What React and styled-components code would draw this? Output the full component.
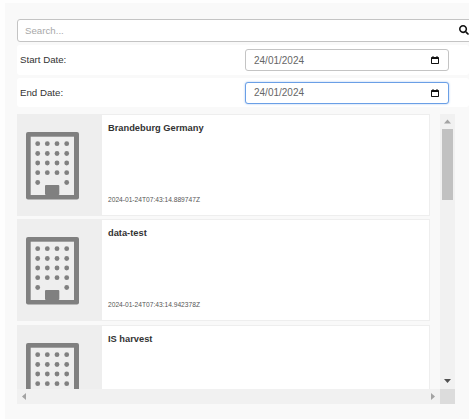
import React from 'react';
import styled, { createGlobalStyle } from 'styled-components';
import { FaSearch } from 'react-icons/fa';

const GlobalStyle = createGlobalStyle`
  html, body {
    margin: 0;
    height: 100%;
    overflow: hidden;
    background: #fefefe;
    font-family: "Liberation Sans", Arial, sans-serif;
  }
`;

const items = [
  { name: 'Brandeburg Germany', date: '2024-01-24T07:43:14.889747Z' },
  { name: 'data-test', date: '2024-01-24T07:43:14.942378Z' },
  { name: 'IS harvest', date: '2024-01-24T07:43:14.990112Z' },
];

const BuildingIcon = () => {
  const xs = [37.7, 47.3, 57, 66.7];
  const ys = [143.7, 153.5, 163, 172.7];
  return (
    <svg width="84" height="102" viewBox="17 114 84 102" aria-hidden="true">
      <rect x="26" y="132" width="53" height="67.5" rx="2" fill="#808080" />
      <rect x="30.7" y="136.7" width="43.3" height="58.3" fill="#eeeeee" />
      {ys.map((y) => xs.map((x) => <circle key={`${x}-${y}`} cx={x} cy={y} r="2.4" fill="#808080" />))}
      <circle cx="37.7" cy="182.5" r="2.4" fill="#808080" />
      <circle cx="66.7" cy="182.5" r="2.4" fill="#808080" />
      <rect x="45" y="185" width="14.3" height="10" rx="1" fill="#808080" />
    </svg>
  );
};

const CalendarIcon = () => (
  <svg width="8" height="8" viewBox="0 0 8 8" aria-hidden="true">
    <path d="M1.5 0h1v1h3V0h1v1h.7a.8.8 0 0 1 .8.8v5.4a.8.8 0 0 1-.8.8H.8A.8.8 0 0 1 0 7.2V1.8A.8.8 0 0 1 .8 1h.7zM1 3v4h6V3z" fill="#111" />
  </svg>
);

const Arrow = ({ points, color }) => (
  <svg width="15" height="15" viewBox="0 0 15 15" aria-hidden="true">
    <polygon points={points} fill={color} />
  </svg>
);

const DateInputBox = ({ focused }) => (
  <DateField>
    <DateInput type="text" defaultValue="24/01/2024" $focused={focused} />
    <PickerIcon>
      <CalendarIcon />
    </PickerIcon>
  </DateField>
);

const App = () => {
  return (
    <>
      <GlobalStyle />
      <Page>
        <Panel>
          <SearchBar>
            <SearchInput placeholder="Search..." />
            <SearchIcon>
              <FaSearch />
            </SearchIcon>
          </SearchBar>
          <DateRow $height={30}>
            <DateLabel $lift={1}>Start Date:</DateLabel>
            <DateInputBox />
          </DateRow>
          <DateRow $height={29}>
            <DateLabel $lift={0}>End Date:</DateLabel>
            <DateInputBox focused />
          </DateRow>
          <ListFrame>
            <Viewport>
              {items.map((item) => (
                <Card key={item.date}>
                  <Thumb>
                    <BuildingIcon />
                  </Thumb>
                  <CardBody>
                    <CardTitle>{item.name}</CardTitle>
                    <CardDate>{item.date}</CardDate>
                  </CardBody>
                </Card>
              ))}
            </Viewport>
            <VerticalBar>
              <Arrow points="4,9.5 11,9.5 7.5,5.5" color="#a3a3a3" />
              <BarSlot>
                <BarThumb />
              </BarSlot>
              <Arrow points="4,5 11,5 7.5,9" color="#505050" />
            </VerticalBar>
            <HorizontalBar>
              <Arrow points="9,4 9,11 5,7.5" color="#a3a3a3" />
              <Arrow points="6,4 6,11 10,7.5" color="#a3a3a3" />
            </HorizontalBar>
            <BarCorner />
          </ListFrame>
        </Panel>
      </Page>
    </>
  );
};

const Page = styled.div`
  width: 469px;
  height: 419px;
  overflow: hidden;
  padding: 3px 0 0 5px;
  box-sizing: border-box;
`;

const Panel = styled.div`
  width: 464px;
  height: 416px;
  background: #f9f9f9;
  padding: 16px 0 0 12px;
  box-sizing: border-box;
`;

const SearchBar = styled.div`
  position: relative;
  width: 470px;
  height: 23px;
`;

const SearchInput = styled.input`
  width: 100%;
  height: 100%;
  box-sizing: border-box;
  background: #fff;
  border: 1px solid #c4c4c4;
  border-radius: 3px;
  padding: 0 8px 0 7px;
  font-family: inherit;
  font-size: 9.7px;
  outline: none;

  &::placeholder {
    color: #a8a8a8;
  }
`;

const SearchIcon = styled.span`
  position: absolute;
  top: 6px;
  left: 442px;
  font-size: 10px;
  line-height: 10px;
  color: #111;
`;

const DateRow = styled.div`
  display: flex;
  align-items: center;
  justify-content: space-between;
  width: 452px;
  height: ${(p) => p.$height}px;
  margin-top: 3px;
  padding: 0 20px 0 3px;
  box-sizing: border-box;
  background: #fff;
  border-radius: 3px;
`;

const DateLabel = styled.label`
  font-size: 9.7px;
  line-height: 10px;
  margin-top: ${(p) => -p.$lift}px;
  color: #333;
`;

const DateField = styled.div`
  position: relative;
  width: 204px;
  height: 22px;
`;

const DateInput = styled.input`
  width: 100%;
  height: 100%;
  box-sizing: border-box;
  padding: 0 8px;
  background: #fff;
  border: 1px solid ${(p) => (p.$focused ? '#6a9fe6' : '#c4c4c4')};
  border-radius: 3px;
  box-shadow: ${(p) => (p.$focused ? '0 0 2px rgba(90, 150, 230, 0.6)' : 'none')};
  font-family: inherit;
  font-size: 10px;
  color: #666;
  outline: none;
`;

const PickerIcon = styled.span`
  position: absolute;
  top: 7px;
  right: 10px;
  display: flex;
`;

const ListFrame = styled.div`
  display: grid;
  grid-template-columns: 423px 15px;
  grid-template-rows: 275px 15px;
  margin-top: 7px;
`;

const Viewport = styled.div`
  overflow: hidden;
`;

const VerticalBar = styled.div`
  display: flex;
  flex-direction: column;
  background: #f1f1f1;
`;

const BarSlot = styled.div`
  flex: 1;
`;

const BarThumb = styled.div`
  width: 11px;
  height: 71px;
  margin: 0 2px;
  background: #c1c1c1;
`;

const HorizontalBar = styled.div`
  display: flex;
  justify-content: space-between;
  background: #f1f1f1;
`;

const BarCorner = styled.div`
  background: #dcdcdc;
`;

const Card = styled.div`
  display: flex;
  width: 413px;
  height: 102px;
  margin-bottom: 3.3px;
  background: #fff;
`;

const Thumb = styled.div`
  display: flex;
  flex: 0 0 84px;
  background: #eee;
`;

const CardBody = styled.div`
  flex: 1;
  display: flex;
  flex-direction: column;
  justify-content: space-between;
  padding: 8px 6px 12px;
  border: 1px solid #eee;
  box-sizing: border-box;
`;

const CardTitle = styled.div`
  font-size: 9.3px;
  font-weight: 700;
  color: #333;
`;

const CardDate = styled.div`
  font-size: 6.65px;
  color: #555;
`;

export default App;
